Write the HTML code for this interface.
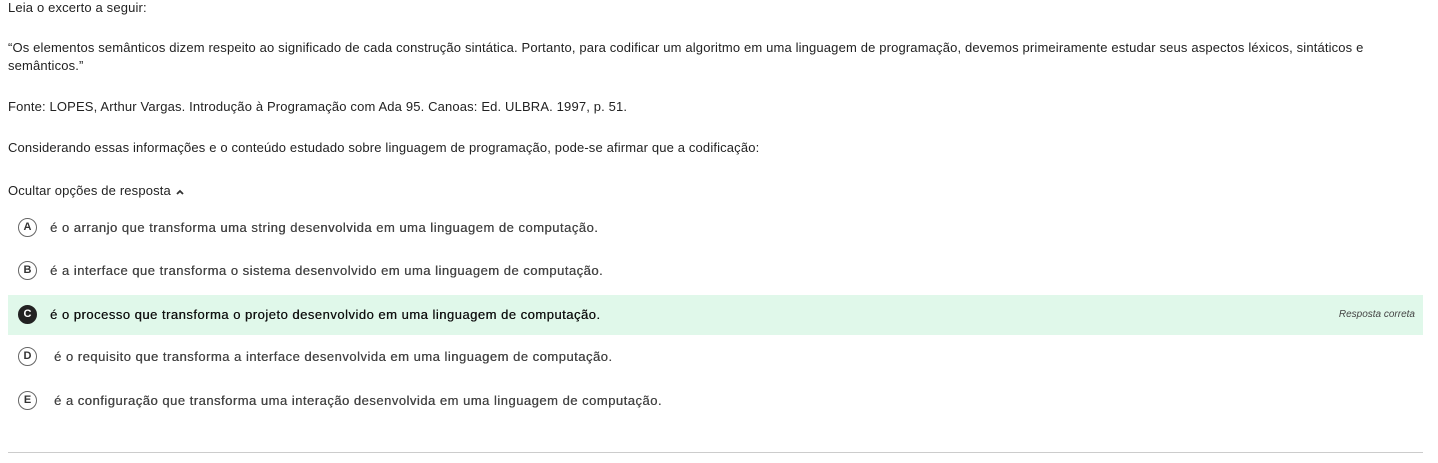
<!DOCTYPE html>
<html><head><meta charset="utf-8"><style>
body{margin:0;width:1438px;height:463px;background:#fff;font-family:"Liberation Sans",sans-serif;font-size:13px;letter-spacing:0.15px;color:#222;position:relative;overflow:hidden}
.t{position:absolute;left:8px;white-space:nowrap;line-height:14px}
.opt{position:absolute;left:8px;width:1415px;height:40px}
.c{position:absolute;left:10px;top:10px;width:17px;height:17px;border:1.5px solid #666;border-radius:50%;font-weight:bold;font-size:11px;letter-spacing:0;text-align:center;line-height:17px;color:#333}
.ot{position:absolute;left:42px;top:12px;font-size:13px;letter-spacing:0.5px;color:#444;white-space:nowrap;text-shadow:0.3px 0 0 #444}
</style></head><body>
<div class="t" style="top:1px">Leia o excerto a seguir:</div>
<div class="t" style="top:41px">“Os elementos semânticos dizem respeito ao significado de cada construção sintática. Portanto, para codificar um algoritmo em uma linguagem de programação, devemos primeiramente estudar seus aspectos léxicos, sintáticos e</div>
<div class="t" style="top:59px">semânticos.”</div>
<div class="t" style="top:100px">Fonte: LOPES, Arthur Vargas. Introdução à Programação com Ada 95. Canoas: Ed. ULBRA. 1997, p. 51.</div>
<div class="t" style="top:141px">Considerando essas informações e o conteúdo estudado sobre linguagem de programação, pode-se afirmar que a codificação:</div>
<div class="t" style="top:184px">Ocultar opções de resposta <svg width="10" height="8" viewBox="0 0 10 8" style="vertical-align:middle"><path d="M2 6 L5 3 L8 6" stroke="#333" stroke-width="1.8" fill="none"/></svg></div>
<div class="opt" style="top:208px"><div class="c">A</div><div class="ot">é o arranjo que transforma uma string desenvolvida em uma linguagem de computação.</div></div>
<div class="opt" style="top:251px"><div class="c">B</div><div class="ot">é a interface que transforma o sistema desenvolvido em uma linguagem de computação.</div></div>
<div class="opt" style="top:295px;background:#e0f8ea"><div class="c" style="background:#222;color:#fff;border-color:#222">C</div><div class="ot" style="color:#111;text-shadow:0.3px 0 0 #111">é o processo que transforma o projeto desenvolvido em uma linguagem de computação.</div><div style="position:absolute;right:8px;top:14px;font-size:10px;letter-spacing:0;font-style:italic;color:#444">Resposta correta</div></div>
<div class="opt" style="top:337px"><div class="c">D</div><div class="ot" style="left:46px">é o requisito que transforma a interface desenvolvida em uma linguagem de computação.</div></div>
<div class="opt" style="top:381px"><div class="c">E</div><div class="ot" style="left:46px">é a configuração que transforma uma interação desenvolvida em uma linguagem de computação.</div></div>
<div style="position:absolute;left:8px;top:452px;width:1415px;height:1px;background:#ccc"></div>
</body></html>
